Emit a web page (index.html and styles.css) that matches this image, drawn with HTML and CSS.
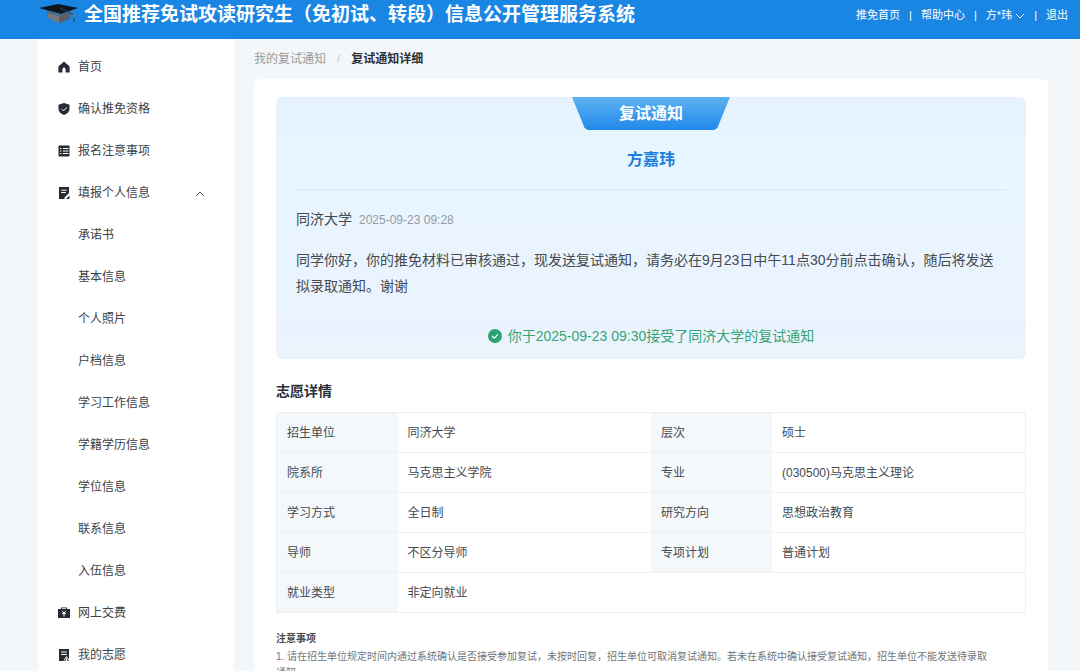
FILE: index.html
```html
<!DOCTYPE html>
<html lang="zh-CN">
<head>
  <meta charset="UTF-8">
  <meta name="viewport" content="width=device-width, initial-scale=1.0">
  <title>复试通知详细</title>
  <link rel="stylesheet" href="styles.css">
</head>
<body>

  <header class="header">
    <svg class="logo" viewBox="0 0 42 20" aria-hidden="true">
      <path d="M9 7 L22 11 L33 7 L32 15 L21 19 L10 14 Z" fill="#5c6066"/>
      <path d="M10 9 L21 12 L21 19 L10 14 Z" fill="#777b80"/>
      <path d="M1 4 L20 0 L40 4 L23 10 Z" fill="#10141b"/>
      <path d="M22 4 L36 11 V18" fill="none" stroke="#28465f"/>
      <circle cx="36" cy="12" r="1" fill="#c08a50"/>
    </svg>
    <h1>全国推荐免试攻读研究生（免初试、转段）信息公开管理服务系统</h1>
    <nav class="user-nav">
      <a href="#">推免首页</a>
      <span>|</span>
      <a href="#">帮助中心</a>
      <span>|</span>
      <button type="button">方*玮
        <svg width="10" height="6" viewBox="0 0 10 6"><path d="M1 1l4 4 4-4" fill="none" stroke="currentColor"/></svg>
      </button>
      <span>|</span>
      <a href="#">退出</a>
    </nav>
  </header>

  <div class="container">
    <aside class="sidebar">
      <ul class="menu">
        <li><a href="#">
          <svg viewBox="0 0 12 12"><path d="M6 0.5L11.6 5.5V11.5H7.6V8.2A1.6 1.6 0 0 0 4.4 8.2V11.5H0.4V5.5Z"/></svg>首页</a></li>
        <li><a href="#">
          <svg viewBox="0 0 12 12"><path d="M6 0L11.5 1.8V6C11.5 9 9 11 6 12C3 11 .5 9 .5 6V1.8Z"/><path class="cut" d="M3.5 5.8l2 2 3.3-3.4"/></svg>确认推免资格</a></li>
        <li><a href="#">
          <svg viewBox="0 0 12 12"><rect x="0.5" y="0.5" width="11" height="11" rx="1"/><path class="cut" d="M2 3.5h1.5M5 3.5h5.5M2 6h1.5M5 6h5.5M2 8.5h1.5M5 8.5h5.5"/></svg>报名注意事项</a></li>
        <li><a href="#" aria-expanded="true">
          <svg viewBox="0 0 12 12"><path d="M1 0H11V6L6.5 10.5V12H1ZM8 12L11.5 8.5V12Z"/><path class="cut" d="M3.2 3.2h5.6M3.2 5.5h4.6"/></svg>填报个人信息
          <svg class="arrow" viewBox="0 0 8 5"><path d="M.5 4.5L4 1l3.5 3.5"/></svg></a>
          <ul class="submenu">
            <li><a href="#">承诺书</a></li>
            <li><a href="#">基本信息</a></li>
            <li><a href="#">个人照片</a></li>
            <li><a href="#">户档信息</a></li>
            <li><a href="#">学习工作信息</a></li>
            <li><a href="#">学籍学历信息</a></li>
            <li><a href="#">学位信息</a></li>
            <li><a href="#">联系信息</a></li>
            <li><a href="#">入伍信息</a></li>
          </ul>
        </li>
        <li><a href="#">
          <svg viewBox="0 0 12 12"><path d="M3 2V.5H9V2H12V11H0V2ZM4 2H8V1.3H4Z" fill-rule="evenodd"/><path class="cut" d="M4.2 4L6 6l1.8-2M6 6v3.6M4.2 6.5h3.6"/></svg>网上交费</a></li>
        <li><a href="#">
          <svg viewBox="0 0 12 12"><path d="M1 0H11V12H9.5L8.7 8.5L7.5 12H1Z"/><path class="cut" d="M3.2 3h5.6M3.2 5.5h5.6M6 11.5L8.5 7.5L11 11.5"/></svg>我的志愿</a></li>
      </ul>
    </aside>

    <main class="main">
      <nav class="breadcrumb">
        <a href="#">我的复试通知</a>
        <span>/</span>
        <strong>复试通知详细</strong>
      </nav>

      <div class="card">
        <section class="notice">
          <h2 class="ribbon">复试通知</h2>
          <p class="name">方嘉玮</p>
          <div class="notice-body">
            <p class="from">同济大学<time>2025-09-23 09:28</time></p>
            <p class="message">同学你好，你的推免材料已审核通过，现发送复试通知，请务必在9月23日中午11点30分前点击确认，随后将发送拟录取通知。谢谢</p>
            <p class="accepted">
              <svg viewBox="0 0 14 14"><circle cx="7" cy="7" r="7" fill="#2ba471"/><path d="M4 7l2.2 2.2L10 5.4" fill="none" stroke="#fff" stroke-width="1.2"/></svg>
              你于2025-09-23 09:30接受了同济大学的复试通知
            </p>
          </div>
        </section>

        <h3>志愿详情</h3>
        <table class="detail">
          <tr>
            <th scope="row">招生单位</th><td>同济大学</td>
            <th scope="row">层次</th><td>硕士</td>
          </tr>
          <tr>
            <th scope="row">院系所</th><td>马克思主义学院</td>
            <th scope="row">专业</th><td>(030500)马克思主义理论</td>
          </tr>
          <tr>
            <th scope="row">学习方式</th><td>全日制</td>
            <th scope="row">研究方向</th><td>思想政治教育</td>
          </tr>
          <tr>
            <th scope="row">导师</th><td>不区分导师</td>
            <th scope="row">专项计划</th><td>普通计划</td>
          </tr>
          <tr>
            <th scope="row">就业类型</th><td colspan="3">非定向就业</td>
          </tr>
        </table>

        <div class="tips">
          <h4>注意事项</h4>
          <p>1. 请在招生单位规定时间内通过系统确认是否接受参加复试，未按时回复，招生单位可取消复试通知。若未在系统中确认接受复试通知，招生单位不能发送待录取<br>通知。</p>
        </div>
      </div>
    </main>
  </div>

</body>
</html>
```
FILE: styles.css
```css
* {
  box-sizing: border-box;
}

body {
  margin: 0;
  background: #f3f7f9;
  color: #444a50;
  font-family: "Liberation Sans", "Noto Sans CJK SC", sans-serif;
  font-size: 12px;
  line-height: 20px;
}

h1, h2, h3, h4, p, ul {
  margin: 0;
  padding: 0;
}

ul {
  list-style: none;
}

a {
  color: inherit;
  text-decoration: none;
}

/* header */
.header {
  display: flex;
  align-items: flex-start;
  height: 39px;
  padding: 0 12px 0 38px;
  background: #1a86e3;
  color: #fff;
}

.logo {
  width: 42px;
  height: 20px;
  margin: 4px 4px 0 0;
}

.header h1 {
  font-size: 19px;
  line-height: 30px;
  white-space: nowrap;
}

.user-nav {
  display: flex;
  gap: 9px;
  margin-left: auto;
  font-size: 11px;
  line-height: 30px;
  white-space: nowrap;
}

.user-nav button {
  padding: 0;
  border: 0;
  background: none;
  color: inherit;
  font: inherit;
  cursor: pointer;
}

/* layout */
.container {
  display: flex;
  gap: 20px;
  padding: 0 32px 0 38px;
}

.sidebar {
  flex: 0 0 196px;
  padding-top: 7px;
  background: #fff;
}

.menu a {
  display: flex;
  align-items: center;
  height: 42px;
  padding: 0 30px 0 20px;
  color: #3c4248;
}

.menu svg {
  width: 12px;
  height: 12px;
  margin-right: 8px;
  fill: #252b33;
}

.menu .cut {
  fill: none;
  stroke: #fff;
}

.menu .arrow {
  width: 8px;
  height: 5px;
  margin: 0 0 0 auto;
  fill: none;
  stroke: #555;
}

.menu .submenu a {
  padding-left: 40px;
}

.main {
  flex: 1;
  min-width: 0;
}

.breadcrumb {
  display: flex;
  gap: 11px;
  padding: 10px 0;
  color: #999;
}

.breadcrumb span {
  color: #c4c8cc;
}

.breadcrumb strong {
  color: #2b3036;
}

.card {
  padding: 18px 22px;
  border-radius: 6px;
  background: #fff;
}

/* notice */
.notice {
  padding: 0 20px 10px;
  border-radius: 6px;
  background: linear-gradient(#e5f2fd, #e8f7ff 30%, #e9f4ff 50%, #ebf3fd);
}

.ribbon {
  width: 158px;
  margin: 0 auto;
  background: linear-gradient(#5cb2f0, #2189ea);
  clip-path: polygon(0 0, 100% 0, 92% 94%, 90% 100%, 10% 100%, 8% 94%);
  color: #fff;
  font-size: 16px;
  line-height: 33px;
  text-align: center;
}

.name {
  padding: 18px 0 17px;
  border-bottom: 1px solid #d9e6ef;
  color: #1a80d9;
  font-size: 16px;
  font-weight: bold;
  line-height: 24px;
  text-align: center;
}

.notice-body {
  font-size: 14px;
  line-height: 26px;
}

.from {
  padding: 16px 0 14px;
}

.from time {
  margin-left: 7px;
  color: #949ba3;
  font-size: 12px;
}

.message {
  padding-right: 12px;
}

.accepted {
  display: flex;
  align-items: center;
  justify-content: center;
  gap: 6px;
  margin-top: 24px;
  color: #37a477;
}

.accepted svg {
  width: 14px;
  height: 14px;
}

/* detail table */
.card h3 {
  margin: 22px 0 11px;
  color: #2b3036;
  font-size: 14px;
}

.detail {
  width: 100%;
  border: 1px solid #edf1f4;
  border-collapse: collapse;
  table-layout: fixed;
}

.detail tr {
  border-bottom: 1px solid #edf1f4;
}

.detail th,
.detail td {
  height: 40px;
  padding: 0 10px;
  text-align: left;
}

.detail th {
  width: 121px;
  background: #f4f8fa;
  font-weight: normal;
}

.tips {
  margin-top: 18px;
  color: #70757a;
  font-size: 10px;
  line-height: 16px;
}

.tips h4 {
  margin-bottom: 2px;
  color: #444a50;
  font-size: 10px;
}
```
